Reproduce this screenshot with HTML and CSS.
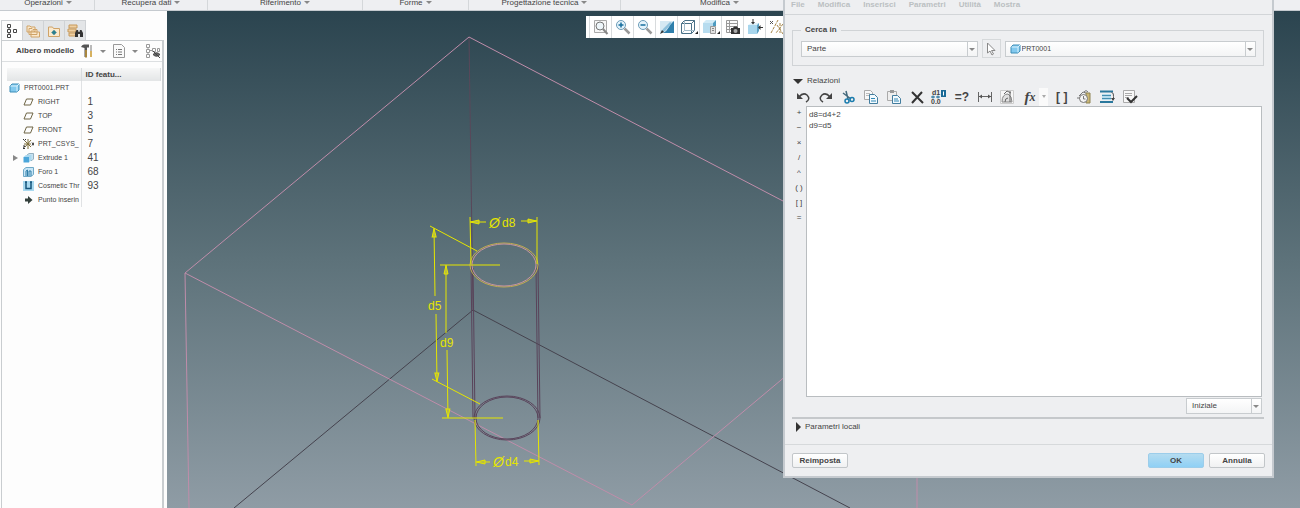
FILE: index.html
```html
<!DOCTYPE html>
<html lang="it">
<head>
    <meta charset="UTF-8">
    <meta name="viewport" content="width=device-width, initial-scale=1.0">
    <title>PRT0001 - Relazioni</title>
    <link rel="stylesheet" href="styles.css">
</head>
<body>
    <!-- ribbon groups -->
    <header class="ribbon">
        <button class="group">Operazioni<i class="caret"></i></button>
        <button class="group">Recupera dati<i class="caret"></i></button>
        <button class="group">Riferimento<i class="caret"></i></button>
        <button class="group">Forme<i class="caret"></i></button>
        <button class="group">Progettazione tecnica<i class="caret"></i></button>
        <button class="group">Modifica<i class="caret"></i></button>
    </header>

    <main class="workspace">
        <!-- model tree -->
        <aside class="sidebar">
            <nav class="tabs">
                <button class="tab active" aria-label="Albero modello">
                    <svg width="14" height="16" viewBox="0 0 14 16" fill="none" stroke="#444"><path d="M2.5 1.500h3v3h-3zM2.500 6.500h3v3h-3zM2.500 11.500h3v3h-3zM8.500 6.500h3v3h-3zM4 4.500v2M4 9.500v2"/></svg>
                </button>
                <button class="tab" aria-label="Livelli">
                    <svg width="14" height="14" viewBox="0 0 14 14" fill="#fbe9cd" stroke="#cfa368"><path d="M1 2h3l1 1h4v5H1zM3 4.500h3l1 1h4v5H3zM5 7h3l1 1h4.500v5H5z"/></svg>
                </button>
                <button class="tab" aria-label="Cartelle">
                    <svg width="14" height="14" viewBox="0 0 14 14"><path d="M1.500 3h4l1 1.500h6v8h-11z" fill="#fbe9cd" stroke="#cfa368"/><circle cx="7" cy="8.500" r="2" fill="#2c7f8e"/><path d="M7 6v5M4.500 8.500h5" stroke="#2c7f8e"/></svg>
                </button>
                <button class="tab" aria-label="Cerca">
                    <svg width="16" height="14" viewBox="0 0 16 14"><path d="M2 1h8v3H2zM1 5h8v3H1zM2 9h7v3H2z" fill="#edcfa3" stroke="#c7995b"/><path d="M8 13V9l1.500-3H11l.5 2h1l.5-2h1.500L16 9v4h-3v-3h-2v3z" fill="#333"/></svg>
                </button>
            </nav>

            <section class="tree-panel">
                <div class="tree-title">
                    <h2>Albero modello</h2>
                    <button class="icon-btn" aria-label="Impostazioni">
                        <svg width="12" height="14" viewBox="0 0 12 14"><path d="M0 3Q1 .5 3 .5h5v3H6V13H3.500V4z" fill="#555"/><path d="M4 6h2v7.500H4z" fill="#a8863e"/><path d="M10 1v7" stroke="#777"/><path d="M9 7h2v6H9z" fill="#d6b160"/></svg>
                    </button>
                    <i class="caret"></i>
                    <button class="icon-btn" aria-label="Mostra">
                        <svg width="12" height="14" viewBox="0 0 12 14"><path d="M.5.5h8l3 3v10H.5z" fill="#fafafa" stroke="#999"/><path d="M3 5.500h1M5 5.500h4M3 8h1M5 8h4M3 10.500h1M5 10.500h4" stroke="#777"/></svg>
                    </button>
                    <i class="caret"></i>
                    <button class="icon-btn" aria-label="Filtra">
                        <svg width="16" height="14" viewBox="0 0 16 14" fill="none" stroke="#999"><path d="M1.500.5h3v3h-3zM1.500 5.500h3v3h-3zM1.500 10.500h3v3h-3zM7.500 4.500h3v3h-3zM12.500 4.500h2v3h-2zM3 3.500v2M3 8.500v2M4.500 6.500h3"/><path d="M8 10.500q3.500-3.500 7 0-3.500 3.500-7 0z" fill="#666" stroke="#444"/><path d="M8 7l7 7" stroke="#444"/></svg>
                    </button>
                </div>

                <table class="tree">
                    <thead>
                        <tr><th class="col-name"></th><th>ID featu...</th></tr>
                    </thead>
                    <tbody>
                        <tr>
                            <td><div class="node root"><svg width="11" height="10" viewBox="0 0 11 10"><path d="M1 3l2-2h7v6L8 9H1z" fill="#82c9ee" stroke="#3c8db7"/><path d="M1.500 3h6.500v5.500M8 3l2-2" fill="none" stroke="#d9f1fc"/></svg><span>PRT0001.PRT</span></div></td>
                            <td></td>
                        </tr>
                        <tr>
                            <td><div class="node"><svg width="11" height="10" viewBox="0 0 11 10"><path d="M3.500 2h6.500L7.500 8H1z" fill="none" stroke="#6e6545"/></svg><span>RIGHT</span></div></td>
                            <td>1</td>
                        </tr>
                        <tr>
                            <td><div class="node"><svg width="11" height="10" viewBox="0 0 11 10"><path d="M3.500 2h6.500L7.500 8H1z" fill="none" stroke="#6e6545"/></svg><span>TOP</span></div></td>
                            <td>3</td>
                        </tr>
                        <tr>
                            <td><div class="node"><svg width="11" height="10" viewBox="0 0 11 10"><path d="M3.500 2h6.500L7.500 8H1z" fill="none" stroke="#6e6545"/></svg><span>FRONT</span></div></td>
                            <td>5</td>
                        </tr>
                        <tr>
                            <td><div class="node"><svg width="11" height="10" viewBox="0 0 11 10" fill="none"><path d="M5 0v10M1 5h7M2 2l6 6M8 1L2 8" stroke="#7b6b36"/><path d="M0 0l1.500 1.500L3 0M0 7h2L0 9.500h2M9 3.500l2 3M11 3.500l-2 3" stroke="#333"/></svg><span>PRT_CSYS_</span></div></td>
                            <td>7</td>
                        </tr>
                        <tr>
                            <td><div class="node branch"><i class="twisty"></i><svg width="11" height="10" viewBox="0 0 11 10"><path d="M4 2l2-1.500h4.500V6L9 7.500H4z" fill="#c7e2f1" stroke="#7296a9" stroke-width=".7"/><path d="M.5 4h5.500v5.500H.5z" fill="#4ba6da"/><path d="M.5 4L3 2h5.500L6 4zM6 4l2.500-2v5L6 9.500z" fill="#a9d8f0"/></svg><span>Extrude 1</span></div></td>
                            <td>41</td>
                        </tr>
                        <tr>
                            <td><div class="node"><svg width="11" height="10" viewBox="0 0 11 10"><path d="M.5 2.500L3 .5h7.500v7L8 9.500H.5z" fill="#c7e6f7" stroke="#6fa9c7"/><path d="M3 9V4l1.500-1v6M6 9V4h2v5" fill="none" stroke="#317ea8"/></svg><span>Foro 1</span></div></td>
                            <td>68</td>
                        </tr>
                        <tr>
                            <td><div class="node"><svg width="11" height="10" viewBox="0 0 11 10"><path d="M0 0h11v10H0z" fill="#a9d9ef"/><path d="M3 1v6.500h5V1M2 1h2M7 1h2" fill="none" stroke="#17567c" stroke-width="1.500"/></svg><span>Cosmetic Thr</span></div></td>
                            <td>93</td>
                        </tr>
                        <tr>
                            <td><div class="node"><svg width="11" height="10" viewBox="0 0 11 10"><path d="M2 3.500h3V1l4.500 4L5 9V6.500H2z" fill="#34403c"/></svg><span>Punto inserin</span></div></td>
                            <td></td>
                        </tr>
                    </tbody>
                </table>
            </section>
        </aside>

        <!-- graphics area -->
        <section class="viewport">
            <svg class="model" viewBox="167 11 1133 497" preserveAspectRatio="xMinYMin slice" fill="none">
                <defs>
                    <marker id="arrow" markerUnits="userSpaceOnUse" markerWidth="11" markerHeight="7" refX="10" refY="3.5" orient="auto">
                        <path d="M1 1.500L9.500 3.500 1 5.500z" fill="#b7bd43" stroke="#e6e600"/>
                    </marker>
                </defs>
                <!-- hidden edges -->
                <g stroke="#45434e">
                    <path d="M473 310L234 508M473 310L850 508"/>
                    <path d="M469 37L473 310" stroke="#59485a"/>
                </g>
                <!-- block -->
                <path d="M189 508L185 273 469 37 917 271V508M185 273L632 505 917 266" stroke="#bf8daa"/>
                <!-- hole -->
                <g stroke="#59435a">
                    <path d="M471 265L473 418M473 268L475 418M536 268L538 418M538 265L540 418"/>
                    <ellipse cx="507" cy="418" rx="33" ry="22"/>
                    <ellipse cx="507" cy="418" rx="31" ry="21"/>
                </g>
                <ellipse cx="504" cy="265" rx="34" ry="22" stroke="#c2ae4e"/>
                <ellipse cx="504" cy="265" rx="32" ry="21" stroke="#c795a0"/>
                <!-- dimensions -->
                <g stroke="#e6e600">
                    <path d="M470 217L471 264M537 217V264M475 420L476 466M538 420L539 465"/>
                    <path d="M430 226L477 251M432 379L480 404M440 265H500M442 418H503"/>
                    <g marker-end="url(#arrow)">
                        <path d="M486 222H470"/>
                        <path d="M521 221H537"/>
                        <path d="M490 462H476"/>
                        <path d="M524 461H539"/>
                        <path d="M435 296L434 228"/>
                        <path d="M436 314L437 382"/>
                        <path d="M446 333V265"/>
                        <path d="M447 350L448 418"/>
                    </g>
                </g>
                <g class="dim-text">
                    <text x="489" y="228" class="dia">Ø</text><text x="502" y="227">d8</text>
                    <text x="493" y="467" class="dia">Ø</text><text x="505" y="466">d4</text>
                    <text x="428" y="310">d5</text>
                    <text x="440" y="347">d9</text>
                </g>
            </svg>

            <div class="view-toolbar">
                <button aria-label="Adatta">
                    <svg width="16" height="16" viewBox="0 0 16 16" fill="none"><path d="M1.500 1.500h12v12h-12z" stroke="#aaa" fill="#f7f7f7"/><circle cx="7" cy="7" r="4" stroke="#777" fill="#eef6fa"/><path d="M10 10l4.500 5" stroke="#888" stroke-width="2"/></svg>
                </button>
                <button aria-label="Zoom avanti">
                    <svg width="16" height="16" viewBox="0 0 16 16" fill="none"><circle cx="6" cy="6" r="4.500" stroke="#6b9cb8" fill="#e4f3fb"/><path d="M3.500 6h5M6 3.500v5" stroke="#176f9f" stroke-width="1.500"/><path d="M9.500 9.500l5 5" stroke="#999" stroke-width="2.500"/></svg>
                </button>
                <button aria-label="Zoom indietro">
                    <svg width="16" height="16" viewBox="0 0 16 16" fill="none"><circle cx="6" cy="6" r="4.500" stroke="#6b9cb8" fill="#e4f3fb"/><path d="M3.500 6h5" stroke="#176f9f" stroke-width="1.500"/><path d="M9.500 9.500l5 5" stroke="#999" stroke-width="2.500"/></svg>
                </button>
                <button aria-label="Ridisegna">
                    <svg width="16" height="16" viewBox="0 0 16 16"><path d="M1 2h14v12H1z" fill="#d5e9f3"/><path d="M15 2v12H4Q8 12 10 8T15 2z" fill="#2f7fab"/><path d="M2 14l2-4 7-7 2 1-7 8z" fill="#8ec1dc"/><path d="M1 15l2-4 2 2z" fill="#333"/></svg>
                </button>
                <button aria-label="Stile visualizzazione">
                    <svg width="18" height="16" viewBox="0 0 18 16" fill="none"><path d="M1.500 4.500h10v10h-10zM1.500 4.500l3-3h10v10l-3 3M11.500 4.500l3-3" stroke="#4b7288"/><path d="M4.500 1.500v10h10M4.500 11.500l-3 3" stroke="#a2bbc8"/><path d="M18 12v3h-3z" fill="#222"/></svg>
                </button>
                <button aria-label="Viste salvate">
                    <svg width="18" height="16" viewBox="0 0 18 16"><path d="M1 4l3-3h10l-3 3z" fill="#d2ebf7"/><path d="M1 4h10v10H1z" fill="#b7dcef"/><path d="M11 4l3-3v6h-3z" fill="#4d9bc1"/><path d="M8.500 7.500h5v7h-5z" fill="#e3e3e3" stroke="#999"/><path d="M10 9.500h2M10 11.500h2" stroke="#888"/><path d="M18 12v3h-3z" fill="#222"/></svg>
                </button>
                <button aria-label="Gestione viste">
                    <svg width="16" height="16" viewBox="0 0 16 16"><path d="M1.500 1.500h11v12h-11zM1.500 4.500h11M1.500 7.500h11M1.500 10.500h11M4.500 1.500v12" fill="#fafafa" stroke="#999"/><path d="M6 9h2l1-1.500h3L13 9h2v6H6z" fill="#333"/><circle cx="10.500" cy="12" r="2" fill="#aaa"/></svg>
                </button>
                <button aria-label="Annotazioni">
                    <svg width="16" height="16" viewBox="0 0 16 16"><path d="M1 6l3-2h8l-2 2z" fill="#dff1fa"/><path d="M1 6h9v9H1z" fill="#a8d6ed"/><path d="M10 6l2-2v8l-2 3z" fill="#5a9fc2"/><path d="M6 0v4M12 8.500h4" stroke="#333"/><path d="M4 3h4L6 5.500zM11 8.500L13.500 6v5z" fill="#333"/></svg>
                </button>
                <button aria-label="Riferimenti">
                    <svg width="16" height="16" viewBox="0 0 16 16" fill="none"><path d="M1 2l3 3M4 2L1 5" stroke="#555"/><path d="M2 14L9 1M8 6l6 9M14 5L7 14M11 4v10" stroke="#a48345" stroke-dasharray="3 1"/></svg>
                </button>
            </div>
        </section>
    </main>

    <!-- relations dialog -->
    <form class="dialog">
        <nav class="menubar">
            <button type="button" disabled>File</button>
            <button type="button" disabled>Modifica</button>
            <button type="button" disabled>Inserisci</button>
            <button type="button" disabled>Parametri</button>
            <button type="button" disabled>Utilità</button>
            <button type="button" disabled>Mostra</button>
        </nav>

        <div class="dialog-body">
            <fieldset class="search">
                <legend>Cerca in</legend>
                <div class="search-row">
                    <div class="combo combo-type">
                        <select aria-label="Tipo oggetto"><option>Parte</option></select>
                    </div>
                    <button type="button" class="pick" aria-label="Seleziona">
                        <svg width="10" height="14" viewBox="0 0 10 14"><path d="M1.500 1v10L4 9l2 4 1.500-1-2-3.500H9z" fill="#fff" stroke="#888"/></svg>
                    </button>
                    <div class="combo combo-part">
                        <svg class="combo-icon" width="11" height="10" viewBox="0 0 11 10"><path d="M1 3l2-2h7v6L8 9H1z" fill="#82c9ee" stroke="#3c8db7"/><path d="M1.500 3h6.500v5.500M8 3l2-2" fill="none" stroke="#d9f1fc"/></svg>
                        <select aria-label="Modello"><option>PRT0001</option></select>
                    </div>
                </div>
            </fieldset>

            <button type="button" class="section-toggle"><i class="arrow-down"></i>Relazioni</button>

            <div class="rel-toolbar">
                <button type="button" aria-label="Annulla modifica">
                    <svg width="16" height="16" viewBox="0 0 16 16" fill="none"><path d="M4 8q4-5 8-2 4 4-1 7" stroke="#444" stroke-width="1.500"/><path d="M2 4v6h6z" fill="#444"/></svg>
                </button>
                <button type="button" aria-label="Ripeti">
                    <svg width="16" height="16" viewBox="0 0 16 16" fill="none"><path d="M12 8Q8 3 4 6q-4 4 1 7" stroke="#444" stroke-width="1.500"/><path d="M14 4v6H8z" fill="#444"/></svg>
                </button>
                <button type="button" aria-label="Taglia">
                    <svg width="16" height="16" viewBox="0 0 16 16" fill="none"><path d="M6 2l2 8M3 4l8 6" stroke="#44697c" stroke-width="1.500"/><circle cx="7" cy="12" r="2" stroke="#1a7bad" stroke-width="1.500"/><circle cx="12" cy="10.500" r="2" stroke="#1a7bad" stroke-width="1.500"/></svg>
                </button>
                <button type="button" aria-label="Copia">
                    <svg width="16" height="16" viewBox="0 0 16 16"><path d="M1.500 1.500h6l2 2v7h-8z" fill="#f8f8f8" stroke="#aaa"/><path d="M3 4.500h4M3 6.500h4" stroke="#bbb"/><path d="M6.500 5.500h5l3 3v6h-8z" fill="#f3fafe" stroke="#437d9e"/><path d="M8 9.500h4M8 12h5" stroke="#3088b5"/></svg>
                </button>
                <button type="button" aria-label="Incolla">
                    <svg width="16" height="16" viewBox="0 0 16 16"><path d="M1.500 2.500h9v9h-9z" fill="#eee" stroke="#aaa"/><path d="M4 1h4v3H4z" fill="#999"/><path d="M6.500 6.500h5l3 3v5h-8z" fill="#f3fafe" stroke="#437d9e"/><path d="M8 10h4M8 12h5" stroke="#3088b5"/></svg>
                </button>
                <button type="button" aria-label="Elimina">
                    <svg width="16" height="16" viewBox="0 0 16 16"><path d="M3 3l11 11M13 3L3 14" stroke="#333" stroke-width="2"/></svg>
                </button>
                <button type="button" aria-label="Commuta quote">
                    <svg width="18" height="16" viewBox="0 0 18 16"><text x="2" y="6" class="glyph-small">d1</text><text x="1" y="15" class="glyph-small">0.0</text><path d="M1 8h4M3 6.500v3M6 8h4M8 6.500v3" stroke="#1b6a96"/><path d="M11 1h5v7h-5z" fill="#1b6a96"/><path d="M13.500 2.500v4" stroke="#fff"/></svg>
                </button>
                <button type="button" class="glyph-btn" aria-label="Valuta">=?</button>
                <button type="button" aria-label="Misura">
                    <svg width="16" height="16" viewBox="0 0 16 16" fill="none"><path d="M1.500 3v10M14.500 3v10M2 7.500h12" stroke="#666"/><path d="M2 7.500l3-2v4zM14 7.500l-3-2v4z" fill="#555"/></svg>
                </button>
                <button type="button" aria-label="Unità">
                    <svg width="16" height="16" viewBox="0 0 16 16" fill="none"><path d="M1.500 1.500h13v13h-13z" fill="#f7f7f7" stroke="#ccc"/><path d="M3 13q0-8 6-8 4 2 4 8z" stroke="#888" fill="#e0e0e0"/><path d="M6 13q0-4 3-4M11 2v11M5 5l3-3 4 2" stroke="#666"/></svg>
                </button>
                <div class="fx-group">
                    <button type="button" class="glyph-btn fx" aria-label="Funzione">f<small>x</small></button>
                    <button type="button" class="fx-more" aria-label="Altre funzioni"><i class="caret"></i></button>
                </div>
                <button type="button" class="glyph-btn" aria-label="Parentesi">[ ]</button>
                <button type="button" aria-label="Parametri">
                    <svg width="16" height="16" viewBox="0 0 16 16" fill="none"><path d="M3 7l4-4 6 2M8 3q2-3 4 0" stroke="#777"/><path d="M10 4h4v10h-4z" fill="#c9b675" stroke="#8d8355"/><circle cx="7.500" cy="9.500" r="4" fill="#f4f4f4" stroke="#777"/><path d="M7.500 7v3h2" stroke="#777"/><path d="M1 9h3" stroke="#777"/></svg>
                </button>
                <button type="button" aria-label="Ordina">
                    <svg width="16" height="16" viewBox="0 0 16 16" fill="none"><path d="M1 2.500h13M1 13h13" stroke="#2a789d" stroke-width="2"/><path d="M3 5h9v6H3z" fill="#b6dced"/><path d="M3 6.500h9M3 9.500h9" stroke="#448eb0"/><path d="M12.500 3.500q2.500 0 2 4v3" stroke="#555"/><path d="M12 9h4l-2 3z" fill="#444"/></svg>
                </button>
                <button type="button" aria-label="Verifica">
                    <svg width="16" height="16" viewBox="0 0 16 16" fill="none"><path d="M1.500 1.500h11v12h-11z" fill="#f8f8f8" stroke="#aaa"/><path d="M3 4.500h7M3 6.500h7M3 8.500h4" stroke="#aaa"/><path d="M5 9l4 4 6-6" stroke="#333" stroke-width="2"/></svg>
                </button>
            </div>

            <div class="editor">
                <div class="operators">
                    <button type="button">+</button>
                    <button type="button">−</button>
                    <button type="button">×</button>
                    <button type="button">/</button>
                    <button type="button">^</button>
                    <button type="button">( )</button>
                    <button type="button">[ ]</button>
                    <button type="button">=</button>
                </div>
                <textarea class="relations" aria-label="Relazioni" spellcheck="false">d8=d4+2
d9=d5</textarea>
            </div>

            <div class="combo combo-state">
                <select aria-label="Stato"><option>Iniziale</option></select>
            </div>

            <button type="button" class="section-toggle local"><i class="arrow-right"></i>Parametri locali</button>
        </div>

        <footer class="actions">
            <button type="reset">Reimposta</button>
            <button type="submit" class="primary">OK</button>
            <button type="button">Annulla</button>
        </footer>
    </form>
</body>
</html>
```
FILE: styles.css
```css
* {
    box-sizing: border-box;
}

body {
    display: flex;
    flex-direction: column;
    height: 100vh;
    margin: 0;
    overflow: hidden;
    position: relative;
    font-family: "Liberation Sans", Arial, sans-serif;
    font-size: 8px;
    line-height: 12px;
    color: #444;
}

button, select, textarea {
    font: inherit;
    color: inherit;
    margin: 0;
    padding: 0;
    border: none;
    background: none;
}

svg {
    display: block;
    flex: none;
}

.caret {
    flex: none;
    border: 3px solid transparent;
    border-top: 3px solid #888;
    border-bottom: none;
}

/* ribbon */
.ribbon {
    display: grid;
    grid-template-columns: 93fr 113fr 155fr 106fr 152fr 198fr 481fr;
    flex: none;
    height: 11px;
    padding-left: 2px;
    background: #eeeff2;
    border-bottom: 1px solid #c5cacf;
}

.group {
    display: flex;
    align-items: center;
    justify-content: center;
    gap: 3px;
    height: 10px;
    padding-bottom: 5px;
    line-height: 8px;
    border-right: 1px solid #d4d7da;
    white-space: nowrap;
}

.workspace {
    display: flex;
    flex: 1;
    min-height: 0;
}

/* model tree */
.sidebar {
    display: flex;
    flex-direction: column;
    flex: none;
    width: 167px;
    padding: 9px 3px 0 1px;
    background: #fdfdfd;
}

.tabs {
    display: flex;
    height: 20px;
}

.tab {
    display: flex;
    align-items: center;
    justify-content: center;
    width: 21px;
    background: #e3e5e7;
    border: 1px solid #cfd2d5;
    border-left: none;
    border-bottom: none;
}

.tab.active {
    width: 22px;
    background: #fdfdfd;
    border-left: 1px solid #cfd2d5;
}

.tree-panel {
    flex: 1;
    border: 1px solid #c9cdd0;
    border-right: 2px solid #c9cdd0;
    border-bottom: none;
}

.tree-title {
    display: flex;
    align-items: center;
    gap: 7px;
    height: 21px;
    padding-left: 14px;
    border-bottom: 1px solid #dcdfe1;
}

.tree-title h2 {
    margin: 0;
    font-size: 8px;
    white-space: nowrap;
}

.tree {
    width: 154px;
    margin: 6px 0 0 5px;
    border-collapse: collapse;
    table-layout: fixed;
}

.tree th {
    height: 13px;
    padding: 0 0 0 4px;
    text-align: left;
    background: linear-gradient(#f6f7f7, #e3e5e6);
    border-right: 1px solid #d9dcde;
}

.tree .col-name {
    width: 74px;
}

.tree td {
    height: 14px;
    padding: 0 0 0 6px;
    font-size: 10px;
}

.tree td:first-child {
    padding: 0;
    border-right: 1px solid #e0e2e4;
}

.node {
    display: flex;
    align-items: center;
    gap: 4px;
    overflow: hidden;
    padding-left: 16px;
    font-size: 7px;
    white-space: nowrap;
}

.node.root {
    padding-left: 2px;
}

.node.branch {
    padding-left: 6px;
}

.twisty {
    border: 3px solid transparent;
    border-left: 5px solid #888;
    border-right: none;
    margin-right: 1px;
}

/* graphics area */
.viewport {
    position: relative;
    flex: 1;
    overflow: hidden;
    background: linear-gradient(#2b444f, #5d727a 50%, #8f9ca5);
}

.model {
    width: 100%;
    height: 100%;
}

.dim-text {
    fill: #e6e600;
    font-size: 12px;
}

.dim-text .dia {
    font-size: 14px;
    font-style: italic;
}

.view-toolbar {
    position: absolute;
    top: 5px;
    left: 37%;
    display: flex;
    height: 22px;
    padding-left: 3px;
    background: #fff;
}

.view-toolbar button {
    display: flex;
    align-items: center;
    justify-content: center;
    width: 22px;
    border-left: 1px solid #d8dbdd;
}

/* relations dialog */
.dialog {
    position: absolute;
    top: 0;
    right: 2%;
    bottom: 30px;
    display: flex;
    flex-direction: column;
    width: calc(38% - 3px);
    min-width: 420px;
    background: #eeeff1;
    border: 2px solid #c5cacf;
    border-top: none;
}

.menubar {
    display: flex;
    gap: 13px;
    height: 15px;
    padding: 0 6px 4px;
    border-bottom: 1px solid #d2d5d8;
    font-weight: bold;
    color: #bbbfc2;
}

.menubar button {
    height: 10px;
    line-height: 10px;
}

.dialog-body {
    display: flex;
    flex-direction: column;
    flex: 1;
    min-height: 0;
    padding: 9px 8px 0 7px;
}

.search {
    height: 42px;
    margin: 0;
    padding: 3px 7px 0 8px;
    border: 1px solid #d0d3d6;
}

.search legend {
    height: 12px;
    padding: 0 4px;
    font-weight: bold;
}

.search-row {
    display: flex;
    align-items: center;
    gap: 4px;
}

.combo {
    position: relative;
    height: 16px;
    background: linear-gradient(#fff, #f3f4f5);
    border: 1px solid #c8cccf;
}

.combo select {
    display: block;
    width: 100%;
    height: 14px;
    padding-left: 5px;
    appearance: none;
}

/* drop-down button drawn over the right end of the field */
.combo::after {
    content: "";
    position: absolute;
    top: 6px;
    right: 2px;
    border: 3px solid transparent;
    border-top: 3px solid #888;
    border-bottom: none;
    pointer-events: none;
}

.combo::before {
    content: "";
    position: absolute;
    top: 0;
    right: 9px;
    bottom: 0;
    border-left: 1px solid #c8cccf;
    pointer-events: none;
}

.combo-type {
    flex: 7;
}

.combo-part {
    flex: 10;
}

.combo-icon {
    position: absolute;
    top: 2px;
    left: 4px;
}

.combo-part select {
    padding-left: 16px;
    font-size: 7px;
}

.pick {
    display: flex;
    align-items: center;
    justify-content: center;
    width: 19px;
    height: 19px;
    border: 1px solid #d6d9db;
}

.section-toggle {
    display: flex;
    align-items: center;
    gap: 4px;
    flex: none;
    height: 12px;
    margin-top: 9px;
    padding-left: 1px;
}

.arrow-down {
    border: 5px solid transparent;
    border-top: 5px solid #333;
    border-bottom: none;
}

.arrow-right {
    border: 5px solid transparent;
    border-left: 5px solid #333;
    border-right: none;
    margin: 0 0 0 4px;
}

.rel-toolbar {
    display: flex;
    align-items: center;
    justify-content: space-between;
    flex: none;
    max-width: 345px;
    height: 19px;
    margin-left: 2px;
}

.rel-toolbar button {
    display: flex;
    align-items: center;
    justify-content: center;
    width: 18px;
    height: 18px;
}

.fx-group {
    display: flex;
}

.rel-toolbar .fx-more {
    width: 9px;
    background: #fafafa;
}

.fx-more .caret {
    border-width: 3px 2px 0;
    border-top-color: #aaa;
}

.rel-toolbar .glyph-btn {
    font-size: 12px;
    font-weight: bold;
}

.rel-toolbar .fx {
    font-family: "Liberation Serif", serif;
    font-size: 15px;
    font-style: italic;
}

.fx small {
    font-size: 12px;
}

.glyph-small {
    font-size: 7px;
    font-weight: bold;
    fill: #444;
}

.editor {
    display: flex;
    flex: 1;
    min-height: 0;
    padding-right: 2px;
}

.operators {
    display: flex;
    flex-direction: column;
    gap: 3px;
    width: 14px;
    padding-top: 1px;
}

.operators button {
    height: 12px;
    white-space: nowrap;
}

.relations {
    flex: 1;
    min-width: 0;
    padding: 2px;
    line-height: 11px;
    background: #fff;
    border: 1px solid #b9bdc0;
    resize: none;
    outline: none;
}

.combo-state {
    flex: none;
    align-self: flex-end;
    width: 76px;
    margin: 1px 2px 0 0;
}

.section-toggle.local {
    width: 100%;
    height: 27px;
    margin-top: 3px;
    padding: 0 0 9px;
    border-top: 2px solid #c5c8cb;
}

.actions {
    display: flex;
    gap: 5px;
    flex: none;
    height: 32px;
    padding: 8px 7px 8px;
    border-top: 1px solid #d6d9db;
}

.actions button {
    width: 56px;
    font-weight: bold;
    background: linear-gradient(#fff, #f0f1f2);
    border: 1px solid #c2c6c9;
    border-radius: 2px;
}

.actions .primary {
    margin-left: auto;
    background: linear-gradient(#b5dcf0, #8fd0f5);
    border-color: #9ccdea;
}
```
